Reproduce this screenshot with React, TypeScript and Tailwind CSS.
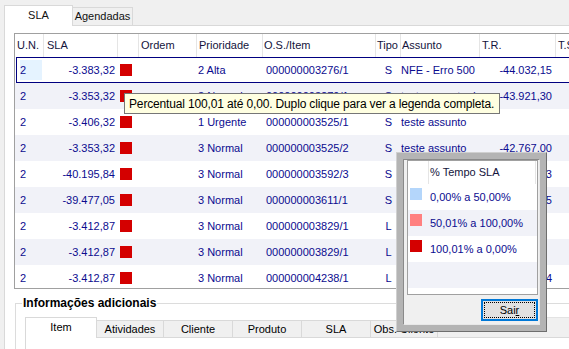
import React from "react";

type Row = {
  sla: string;
  pri: string;
  os: string;
  tipo: string;
  assunto: string;
  tr: string;
};

const rows: Row[] = [
  { sla: "-3.383,32", pri: "2 Alta", os: "000000003276/1", tipo: "S", assunto: "NFE - Erro 500", tr: "-44.032,15" },
  { sla: "-3.353,32", pri: "3 Normal", os: "000000003279/1", tipo: "S", assunto: "teste assunto de nfe", tr: "-43.921,30" },
  { sla: "-3.406,32", pri: "1 Urgente", os: "000000003525/1", tipo: "S", assunto: "teste assunto", tr: "" },
  { sla: "-3.353,32", pri: "3 Normal", os: "000000003525/2", tipo: "S", assunto: "teste assunto", tr: "-42.767,00" },
  { sla: "-40.195,84", pri: "3 Normal", os: "000000003592/3", tipo: "S", assunto: "teste assunto", tr: "-41.903,53" },
  { sla: "-39.477,05", pri: "3 Normal", os: "000000003611/1", tipo: "S", assunto: "teste assunto", tr: "-41.184,75" },
  { sla: "-3.412,87", pri: "3 Normal", os: "000000003829/1", tipo: "L", assunto: "teste", tr: "" },
  { sla: "-3.412,87", pri: "3 Normal", os: "000000003829/1", tipo: "L", assunto: "teste", tr: "" },
  { sla: "-3.412,87", pri: "3 Normal", os: "000000004238/1", tipo: "L", assunto: "teste", tr: "-5.120,34" },
];

function DataRow({ r, i }: { r: Row; i: number }) {
  const selected = i === 0;
  const bg = i % 2 === 1 ? "bg-[#f1f2f8]" : "bg-white";
  return (
    <div className={`relative flex h-[26px] shrink-0 items-center text-[#0b0b8f] ${bg}`}>
      <div className="w-[29px] shrink-0 h-full pl-[5px] flex items-center">
        {selected ? (
          <span className="w-[22px] h-[20px] bg-[#e5f3ff] flex items-center">2</span>
        ) : (
          <span>2</span>
        )}
      </div>
      <div className="w-[74px] shrink-0 pr-[3px] text-right">{r.sla}</div>
      <div className="w-[21px] shrink-0 pl-[2px] flex items-center">
        <span className="block w-[12px] h-[12px] bg-[#d40000]" />
      </div>
      <div className="w-[58px] shrink-0" />
      <div className="w-[66px] shrink-0 pl-[1px] whitespace-nowrap overflow-hidden">{r.pri}</div>
      <div className="w-[113px] shrink-0 pl-[3px] whitespace-nowrap overflow-hidden">{r.os}</div>
      <div className="w-[25px] shrink-0 text-center">{r.tipo}</div>
      <div className="w-[79px] shrink-0 whitespace-nowrap overflow-hidden">{r.assunto}</div>
      <div className="w-[76px] shrink-0 pr-[4px] text-right">{r.tr}</div>
      <div className="w-[80px] shrink-0" />
      {selected && <div className="absolute top-0 bottom-0 left-px right-0 border border-[#000080]" />}
    </div>
  );
}

export default function App() {
  return (
    <div className="w-[569px] h-[349px] overflow-hidden relative bg-[#f0f0f0] text-[11px] leading-none font-['Liberation_Sans',Arial,sans-serif] text-[#111]">
      {/* top tabs */}
      <div className="flex items-end h-[25px] pl-[4px]">
        <div className="relative z-10 -mb-px w-[69px] h-[21px] bg-white border-t border-l border-r border-[#d9d9d9] flex items-center justify-center pb-[2px]">
          SLA
        </div>
        <div className="w-[60px] h-[18px] bg-[#f0f0f0] border-t border-r border-[#d9d9d9] flex items-center justify-center">
          Agendadas
        </div>
      </div>

      {/* tab page */}
      <div className="ml-[4px] w-[600px] h-[324px] border-t border-l border-[#d9d9d9] bg-white pl-[9px] pt-[7px] flex flex-col">
        {/* grid */}
        <div className="w-[600px] h-[256px] border border-[#a0a0a0] overflow-hidden flex flex-col bg-white">
          <div className="flex h-[23px] shrink-0 bg-white text-[#14143c]">
            <div className="w-[29px] shrink-0 border-r border-[#e5e5e5] pl-[2px] flex items-center">U.N.</div>
            <div className="w-[74px] shrink-0 border-r border-[#e5e5e5] pl-[3px] flex items-center">SLA</div>
            <div className="w-[21px] shrink-0 border-r border-[#e5e5e5]" />
            <div className="w-[58px] shrink-0 border-r border-[#e5e5e5] pl-[2px] flex items-center">Ordem</div>
            <div className="w-[66px] shrink-0 border-r border-[#e5e5e5] pl-[2px] flex items-center">Prioridade</div>
            <div className="w-[113px] shrink-0 border-r border-[#e5e5e5] pl-[1px] flex items-center">O.S./Item</div>
            <div className="w-[25px] shrink-0 border-r border-[#e5e5e5] pl-[1px] flex items-center">Tipo</div>
            <div className="w-[79px] shrink-0 border-r border-[#e5e5e5] pl-[1px] flex items-center">Assunto</div>
            <div className="w-[76px] shrink-0 border-r border-[#e5e5e5] pl-[2px] flex items-center">T.R.</div>
            <div className="w-[80px] shrink-0 pl-[2px] flex items-center">T.S.</div>
          </div>
          {rows.map((r, i) => (
            <DataRow key={i} r={r} i={i} />
          ))}
        </div>

        {/* group box */}
        <div className="mt-[14px] ml-[1px] flex-1 border-t border-l border-[#dcdcdc] flex flex-col">
          <span className="-mt-[8px] ml-[6px] px-[1px] w-fit h-[14px] bg-white font-bold text-[12px] leading-[14px] text-black">
            Informações adicionais
          </span>
          <div className="mt-[7px] pl-[9px] flex items-end h-[20px]">
            <div className="relative z-10 -mb-px w-[72px] h-[21px] bg-white border-t border-l border-r border-[#d9d9d9] flex items-center justify-center pb-[1px] text-black">
              Item
            </div>
            <div className="w-[67px] h-[17px] bg-[#f0f0f0] border-t border-r border-[#d9d9d9] flex items-center justify-center text-black">Atividades</div>
            <div className="w-[69px] h-[17px] bg-[#f0f0f0] border-t border-r border-[#d9d9d9] flex items-center justify-center text-black">Cliente</div>
            <div className="w-[69px] h-[17px] bg-[#f0f0f0] border-t border-r border-[#d9d9d9] flex items-center justify-center text-black">Produto</div>
            <div className="w-[69px] h-[17px] bg-[#f0f0f0] border-t border-r border-[#d9d9d9] flex items-center justify-center text-black">SLA</div>
            <div className="w-[67px] h-[17px] bg-[#f0f0f0] border-t border-r border-[#d9d9d9] flex items-center justify-center text-black whitespace-nowrap overflow-hidden">Obs. Cliente</div>
            <div className="flex-1 h-[20px] bg-[#f0f0f0] border-t border-[#e3e3e3]" />
          </div>
          <div className="ml-[9px] flex-1 border-t border-l border-[#d9d9d9] bg-white" />
        </div>
      </div>

      {/* tooltip */}
      <div className="absolute left-[124px] top-[93px] w-[376px] h-[21px] border border-[#767676] bg-[#ffffe1] pl-[4px] flex items-center text-[12px] tracking-[-0.15px] text-black whitespace-nowrap">
        Percentual 100,01 até 0,00. Duplo clique para ver a legenda completa.
      </div>

      {/* legend popup */}
      <div className="absolute left-[396px] top-[152px] w-[151px] h-[180px] bg-[#b4b4b4] border border-t-[#d0d0d0] border-l-[#d0d0d0] border-r-[#6e6e6e] border-b-[#6e6e6e] p-[6px]">
        <div className="w-full h-full bg-[#f0f0f0] border border-t-[#8a8a8a] border-l-[#8a8a8a] border-r-[#e8e8e8] border-b-[#e8e8e8] pl-[3px] pt-0 flex flex-col">
          <div className="w-[131px] h-[135px] border border-[#a0a0a0] bg-white flex flex-col">
            <div className="flex h-[23px] shrink-0 text-[#14143c]">
              <div className="w-[21px] shrink-0 border-r border-[#e5e5e5]" />
              <div className="w-[107px] shrink-0 border-r border-[#e5e5e5] pl-[1px] flex items-center">% Tempo SLA</div>
            </div>
            {[
              { c: "bg-[#b4d6fb]", t: "0,00% a 50,00%", bg: "bg-white" },
              { c: "bg-[#ff8080]", t: "50,01% a 100,00%", bg: "bg-[#f1f2f8]" },
              { c: "bg-[#d40000]", t: "100,01% a 0,00%", bg: "bg-white" },
            ].map((x, i) => (
              <div key={i} className={`flex h-[26px] shrink-0 ${x.bg}`}>
                <div className="w-[21px] shrink-0 pl-[2px] pt-[4px]">
                  <span className={`block w-[12px] h-[12px] ${x.c}`} />
                </div>
                <div className="flex-1 pl-[1px] flex items-center text-[#0b0b8f] whitespace-nowrap">{x.t}</div>
              </div>
            ))}
            <div className="h-[26px] shrink-0 bg-[#f1f2f8]" />
          </div>
          <div className="mt-[4px] self-end mr-[1px] w-[57px] h-[22px] border-2 border-[#0078d7] bg-[#e1e1e1] p-[1px]">
            <div className="w-full h-full border border-dotted border-black flex items-center justify-center text-black">
              Sai<span className="underline">r</span>
            </div>
          </div>
        </div>
      </div>
    </div>
  );
}
